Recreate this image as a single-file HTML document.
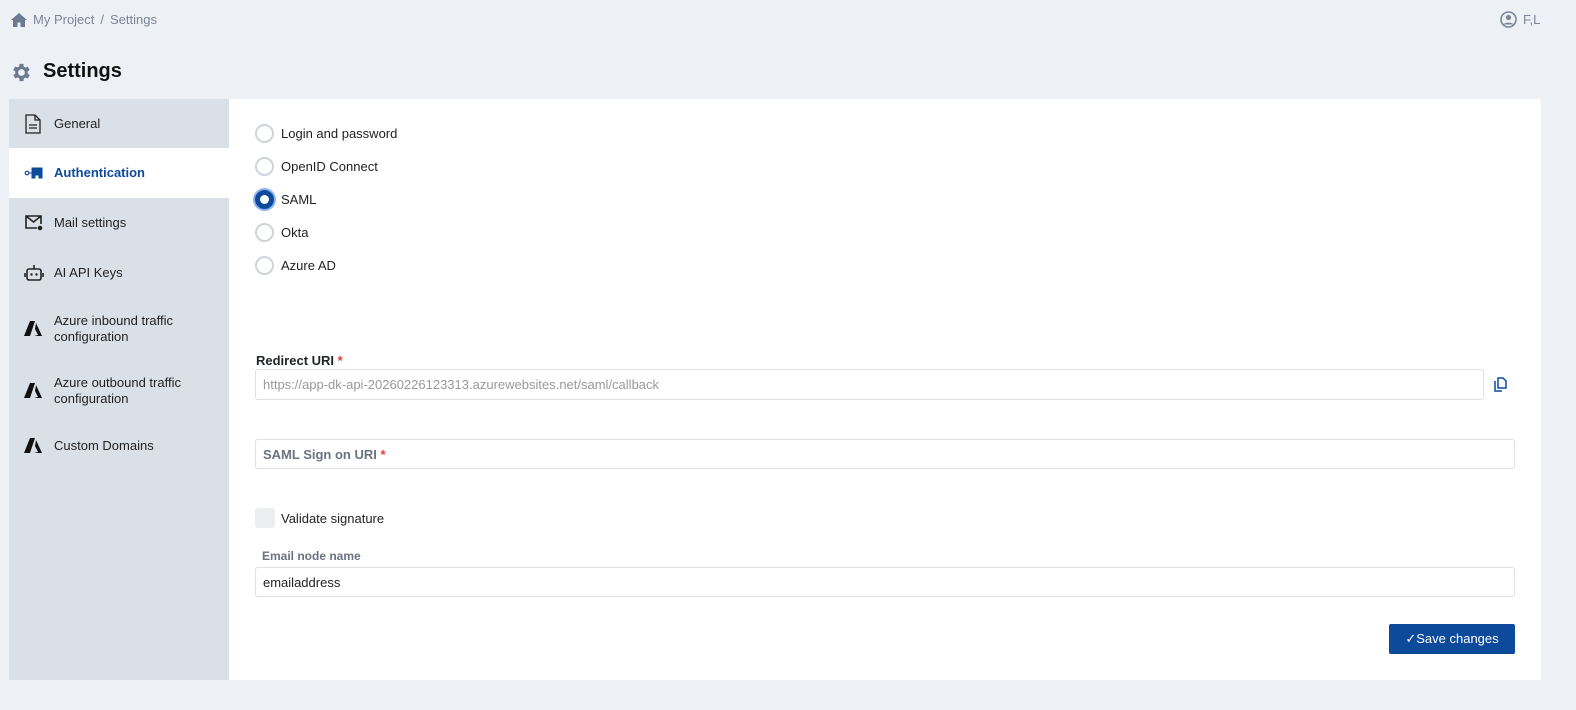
<!DOCTYPE html>
<html><head><style>
*{box-sizing:border-box;margin:0;padding:0}
body{width:1576px;height:710px;background:#edf1f6;font-family:"Liberation Sans",sans-serif;position:relative;overflow:hidden;color:#212529}
.abs{position:absolute}
.bc{left:11px;top:12px;font-size:13px;color:#7a8597;display:flex;align-items:center;gap:6px}
.user{left:1500px;top:11px;font-size:13px;color:#7a8597;display:flex;align-items:center;gap:6px}
h1{position:absolute;left:43px;top:60px;font-size:20px;font-weight:bold;color:#111}
.side{left:9px;top:99px;width:220px;height:581px;background:#dae0e8}
.item{position:absolute;left:0;width:220px;display:flex;align-items:center;font-size:13px;color:#222}
.item svg{position:absolute;left:15px}
.item span{position:absolute;left:45px;line-height:16px}
.main{left:229px;top:99px;width:1312px;height:581px;background:#fff}
.radio{position:absolute;left:255px;display:flex;align-items:center;font-size:13px;color:#222}
.radio i{display:block;width:19px;height:19px;border:2px solid #cfd4da;border-radius:50%;margin-right:7px}
.inp{position:absolute;border:1px solid #dcdfe3;border-radius:3px;font-size:13px;display:flex;align-items:center;padding-left:7px}
.lbl{position:absolute;font-size:12px;font-weight:bold}
.req{color:#e53935}
</style></head><body>
<div class="abs bc"><svg width="16" height="14" viewBox="0 0 16 14"><path d="M8 0L0 7h2v7h4.5V9.5h3V14H14V7h2z" fill="#6b7a8f"/></svg><span>My Project</span><span>/</span><span>Settings</span></div>
<div class="abs user"><svg width="17" height="17" viewBox="0 0 17 17"><circle cx="8.5" cy="8.5" r="7.5" fill="none" stroke="#7a8597" stroke-width="1.6"/><circle cx="8.5" cy="6.5" r="2.6" fill="#7a8597"/><path d="M3.5 13.5c1.5-2.5 8.5-2.5 10 0" fill="#7a8597"/></svg>F,L</div>
<svg class="abs" style="left:10px;top:61px" width="23" height="23" viewBox="0 0 24 24"><path fill="#6b7a8f" d="M19.4 13a7.5 7.5 0 000-2l2.1-1.6-2-3.5-2.5 1a7 7 0 00-1.7-1L15 3h-4l-.4 2.8a7 7 0 00-1.7 1l-2.5-1-2 3.5L6.6 11a7.5 7.5 0 000 2l-2.1 1.6 2 3.5 2.5-1a7 7 0 001.7 1L11 21h4l.4-2.8a7 7 0 001.7-1l2.5 1 2-3.5zM13 15.5a3.5 3.5 0 110-7 3.5 3.5 0 010 7z" transform="translate(-1 0)"/></svg>
<h1>Settings</h1>
<div class="abs side">
 <div class="item" style="top:0;height:49px"><svg width="18" height="20" viewBox="0 0 18 20"><path d="M2 1h9l5 5v13H2z M11 1v5h5 M5 11h8M5 14h8" fill="none" stroke="#222" stroke-width="1.3"/></svg><span>General</span></div>
 <div class="item" style="top:49px;height:50px;background:#fff;color:#0d4a9c;font-weight:bold"><svg width="20" height="16" viewBox="0 0 20 16"><circle cx="3" cy="8" r="1.8" fill="none" stroke="#0d4a9c" stroke-width="1.2"/><path d="M5 8h3M8 3h10v10h-3v-3h-4v3H8z" fill="#0d4a9c" stroke="#0d4a9c"/></svg><span>Authentication</span></div>
 <div class="item" style="top:99px;height:50px"><svg width="20" height="18" viewBox="0 0 20 18"><path d="M13 14H2V2h15v8M2 2l7.5 6L17 2" fill="none" stroke="#222" stroke-width="1.6"/><circle cx="16" cy="14" r="2.3" fill="#222"/></svg><span>Mail settings</span></div>
 <div class="item" style="top:149px;height:50px"><svg width="20" height="18" viewBox="0 0 20 18"><rect x="3" y="5" width="14" height="11" rx="2" fill="none" stroke="#222" stroke-width="1.6"/><path d="M10 1v4M1 9v4M19 9v4" stroke="#222" stroke-width="1.6"/><circle cx="7.5" cy="10.5" r="1.2" fill="#222"/><circle cx="12.5" cy="10.5" r="1.2" fill="#222"/></svg><span>AI API Keys</span></div>
 <div class="item" style="top:199px;height:62px"><svg width="18" height="16" viewBox="0 0 18 16"><path d="M6 0h5L6 15H0z M12 2l6 13h-8l4-1-3-6z" fill="#111"/></svg><span>Azure inbound traffic<br>configuration</span></div>
 <div class="item" style="top:261px;height:62px"><svg width="18" height="16" viewBox="0 0 18 16"><path d="M6 0h5L6 15H0z M12 2l6 13h-8l4-1-3-6z" fill="#111"/></svg><span>Azure outbound traffic<br>configuration</span></div>
 <div class="item" style="top:323px;height:48px"><svg width="18" height="16" viewBox="0 0 18 16"><path d="M6 0h5L6 15H0z M12 2l6 13h-8l4-1-3-6z" fill="#111"/></svg><span>Custom Domains</span></div>
</div>
<div class="abs main"></div>
<div class="radio" style="top:124px"><i></i>Login and password</div>
<div class="radio" style="top:157px"><i></i>OpenID Connect</div>
<div class="radio" style="top:190px"><i style="border:5px solid #0d4a9c;box-shadow:0 0 0 2px #8ab6f0"></i>SAML</div>
<div class="radio" style="top:223px"><i></i>Okta</div>
<div class="radio" style="top:256px"><i></i>Azure AD</div>
<div class="lbl" style="left:256px;top:353px;font-size:13px">Redirect URI <span class="req">*</span></div>
<div class="inp" style="left:255px;top:369px;width:1229px;height:31px;color:#999">https://app-dk-api-20260226123313.azurewebsites.net/saml/callback</div>
<svg class="abs" style="left:1494px;top:377px" width="13" height="15" viewBox="0 0 13 15"><path d="M4 1h5l3 3v7H4z M1 4v10h7" fill="none" stroke="#0d4a9c" stroke-width="1.5"/></svg>
<div class="inp" style="left:255px;top:439px;width:1260px;height:30px;color:#6b7280;font-weight:bold">SAML Sign on URI&nbsp;<span class="req">*</span></div>
<div class="abs" style="left:255px;top:508px;width:20px;height:20px;background:#eceef0;border-radius:3px"></div>
<div class="abs" style="left:281px;top:511px;font-size:13px;color:#222">Validate signature</div>
<div class="lbl" style="left:262px;top:549px;color:#6b7280">Email node name</div>
<div class="inp" style="left:255px;top:567px;width:1260px;height:30px;color:#222">emailaddress</div>
<div class="abs" style="left:1389px;top:624px;width:126px;height:30px;background:#0d4a9c;border-radius:2px;color:#fff;font-size:13px;display:flex;align-items:center;justify-content:center">✓Save changes</div>
</body></html>
